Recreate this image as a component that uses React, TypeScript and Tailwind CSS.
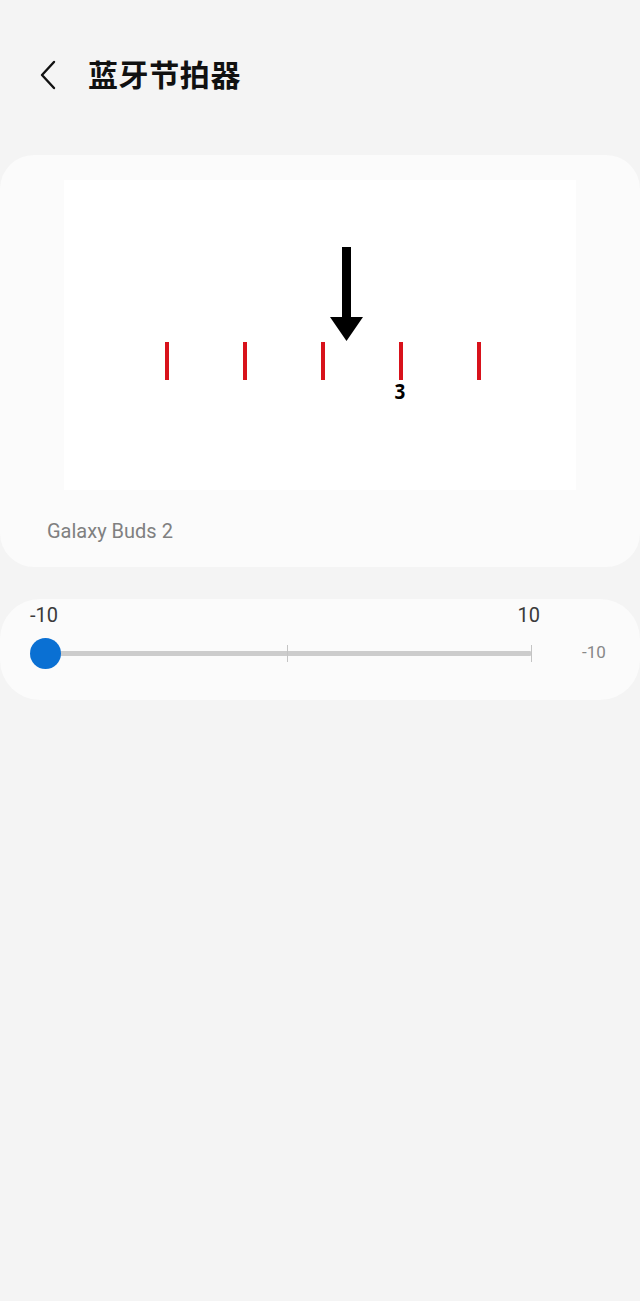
import React from 'react';

const Metronome: React.FC = () => {
  const ticks = [103, 181, 259, 337, 415];
  return (
    <svg width="512" height="310" viewBox="0 0 512 310" className="block">
      <rect width="512" height="310" fill="#ffffff" />
      {ticks.map((x) => (
        <rect key={x} x={x - 2} y={162} width={4} height={38} fill="#d8121b" />
      ))}
      <rect x="278" y="67" width="9" height="72" fill="#000" />
      <polygon points="266,137 299,137 282.5,161" fill="#000" />
      <text
        x="336"
        y="219"
        textAnchor="middle"
        fontSize="21"
        fontWeight="700"
        fontFamily="'Open Sans', sans-serif"
        fill="#000"
        transform="translate(336 0) scale(0.9 1) translate(-336 0)"
      >
        3
      </text>
    </svg>
  );
};

export default function App() {
  return (
    <div
      className="min-h-[1301px] w-[640px] bg-[#f4f4f4]"
      style={{ fontFamily: "Roboto, 'Noto Sans CJK SC', sans-serif" }}
    >
      {/* header */}
      <div className="flex h-[152px] items-start pt-[57px]">
        <button className="ml-[34px] flex h-[36px] w-[28px] items-center justify-center">
          <svg width="18" height="30" viewBox="0 0 18 30" fill="none">
            <path d="M15 2 L3 15 L15 28" stroke="#111" strokeWidth="2.4" strokeLinecap="round" strokeLinejoin="round" />
          </svg>
        </button>
        <h1 className="ml-[26px] text-[30px] font-bold leading-[38px] tracking-[0.6px] text-[#111]">蓝牙节拍器</h1>
      </div>

      {/* metronome card */}
      <div className="mt-[3px] h-[412px] rounded-[34px] bg-[#fbfbfb] pt-[25px]">
        <div className="mx-auto w-[512px]">
          <Metronome />
        </div>
        <div className="mt-[28px] pl-[47px] text-[20px] leading-[26px] text-[#808080]">Galaxy Buds 2</div>
      </div>

      {/* slider card */}
      <div className="mt-[32px] h-[101px] rounded-[40px] bg-[#fbfbfb] px-[30px] pt-[2px]">
        <div className="flex w-[512px] justify-between text-[20px] leading-[28px] text-[#3a3a3a]">
          <span>-10</span>
          <span className="mr-[2px]">10</span>
        </div>
        <div className="mt-[8px] flex items-center">
          <div className="relative h-[32px] w-[502px]">
            <div className="absolute left-[15px] right-0 top-[14px] h-[5px] rounded-full bg-[#cccccc]" />
            <div className="absolute left-[257px] top-[8px] h-[17px] w-[1px] bg-[#c4c4c4]" />
            <div className="absolute right-0 top-[8px] h-[17px] w-[1px] bg-[#c4c4c4]" />
            <div className="absolute left-0 top-[1px] h-[31px] w-[31px] rounded-full bg-[#0a70d3]" />
          </div>
          <span className="ml-[50px] text-[17px] text-[#888888]">-10</span>
        </div>
      </div>
    </div>
  );
}
